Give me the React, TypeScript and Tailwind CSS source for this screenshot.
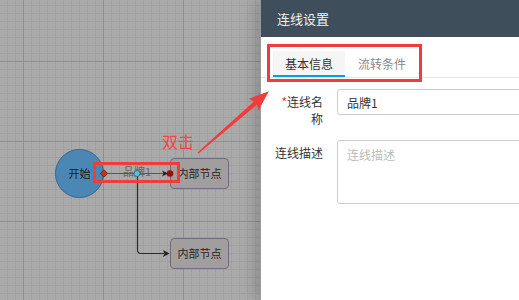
import React from "react";

const NODE_BOX =
  "absolute flex items-center justify-center rounded-[4px] border border-[#6e6c7c] bg-[#a29e9e] text-[11px] text-[#1e1e1e]";

function Canvas() {
  return (
    <div className="relative h-full w-[260px] shrink-0 bg-[#aaaaaa]">
      <svg className="absolute inset-0" width="260" height="300">
        <defs>
          <pattern id="minor" x="7" y="5" width="8" height="8" patternUnits="userSpaceOnUse">
            <path d="M0 0.5H8M0.5 0V8" stroke="#a0a0a0" strokeWidth="1" fill="none" />
          </pattern>
          <pattern id="major" x="23" y="61" width="80" height="80" patternUnits="userSpaceOnUse">
            <path d="M0 0.5H80M0.5 0V80" stroke="#8f8f8f" strokeWidth="1" fill="none" />
          </pattern>
        </defs>
        <rect width="260" height="300" fill="url(#minor)" />
        <rect width="260" height="300" fill="url(#major)" />
      </svg>

      {/* start node */}
      <div className="absolute left-[55px] top-[149px] flex h-[49px] w-[49px] items-center justify-center rounded-full border border-[#3a6587] bg-[#4b87b4] text-[11px] text-[#1a1a1a]">
        开始
      </div>

      {/* edge label */}
      <div className="absolute left-[117px] top-[164px] w-[40px] text-center text-[11px] leading-[14px] text-[#666]">
        品牌1
      </div>

      <div className={`${NODE_BOX} left-[170px] top-[158px] h-[31px] w-[59px]`}>内部节点</div>
      <div className={`${NODE_BOX} left-[170px] top-[238px] h-[31px] w-[59px]`}>内部节点</div>

      <svg className="absolute inset-0" width="260" height="300">
        <line x1="104" y1="173.5" x2="166" y2="173.5" stroke="#1d6a86" strokeWidth="1.2" />
        <path d="M137.5 176V250Q137.5 253.5 141 253.5H164" stroke="#2a2a2a" strokeWidth="1.2" fill="none" />
        <polygon points="163,250 169.5,253.5 163,257 164.5,253.5" fill="#222" />
        <polygon points="162,170.5 168,173.5 162,176.5 163.5,173.5" fill="#222" />
        <polygon points="104,169.8 107.7,173.5 104,177.2 100.3,173.5" fill="#c2311f" stroke="#7d1a10" strokeWidth="0.8" />
        <circle cx="170" cy="173.5" r="3.3" fill="#9a0d0d" />
        <circle cx="137" cy="173.5" r="3" fill="#5cc2da" stroke="#1b7794" strokeWidth="1" />
      </svg>
    </div>
  );
}

function Panel() {
  return (
    <div className="relative z-10 h-full flex-1 overflow-hidden border-l border-[#9a9a9a] bg-white shadow-[-5px_0_14px_rgba(0,0,0,0.18)]">
      <div className="flex h-[37px] items-center bg-[#3e4f5b] pl-[16px] text-[13px] text-[#f2f2f2]">
        连线设置
      </div>

      <div className="mt-[14px] flex border-b border-[#e4e4e4] pl-[12px]">
        <div className="flex h-[26px] items-center border-b-2 border-[#00a0e9] bg-[#f5f5f5] px-[12px] pt-[2px] text-[12px] text-[#333]">
          基本信息
        </div>
        <div className="flex h-[26px] items-center px-[13px] text-[12px] text-[#888]">流转条件</div>
      </div>

      <div className="mt-[11px] flex h-[26px] items-start">
        <label className="ml-[14px] w-[48px] shrink-0 pt-[4px] text-right text-[12px] leading-[17px] text-[#333]">
          <span className="text-[#e33]">*</span>连线名称
        </label>
        <input
          readOnly
          value="品牌1"
          className="ml-[14px] h-[26px] w-[220px] shrink-0 rounded-[3px] border border-[#cccccc] px-[9px] text-[12px] text-[#333] outline-none"
        />
      </div>

      <div className="mt-[25px] flex items-start">
        <label className="ml-[14px] w-[48px] shrink-0 pt-[4px] text-right text-[12px] leading-[17px] text-[#333]">
          连线描述
        </label>
        <textarea
          placeholder="连线描述"
          className="ml-[14px] h-[64px] w-[220px] shrink-0 resize-none rounded-[3px] border border-[#cccccc] px-[9px] pt-[5px] text-[12px] leading-[17px] text-[#333] outline-none placeholder:text-[#bbbbbb]"
        />
      </div>
    </div>
  );
}

function Annotations() {
  return (
    <div className="pointer-events-none absolute inset-0 z-20">
      <svg className="absolute inset-0" width="519" height="300">
        <rect x="94.5" y="163.5" width="84" height="18" fill="none" stroke="#f23b3b" strokeWidth="3" />
        <rect x="268.5" y="45.5" width="152" height="35" fill="none" stroke="#f23b3b" strokeWidth="3" />
        <polygon
          points="198.5,153.5 256.7,104.8 258.7,110.1 268.9,91.2 248.9,98.7 253.9,101.4 197.5,152.5"
          fill="#f23b3b"
        />
      </svg>
      <div className="absolute left-[162px] top-[132px] text-[16px] leading-[18px] text-[#f24545]">双击</div>
    </div>
  );
}

export default function App() {
  return (
    <div className="relative flex h-[300px] w-[519px] overflow-hidden bg-white font-['Noto_Sans_CJK_SC','Noto_Sans',sans-serif]">
      <Canvas />
      <Panel />
      <Annotations />
    </div>
  );
}
